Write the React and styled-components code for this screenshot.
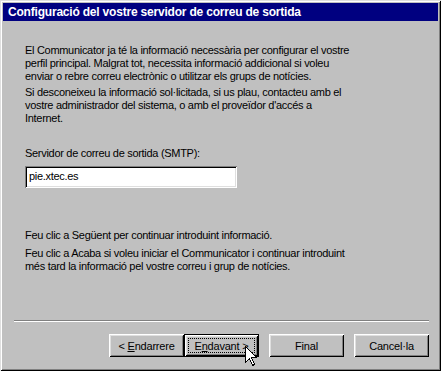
import React from 'react';
import styled, { createGlobalStyle } from 'styled-components';

const GlobalStyle = createGlobalStyle`
  html, body {
    margin: 0;
    padding: 0;
    background: #c0c0c0;
  }
  * {
    box-sizing: border-box;
  }
`;

const Window = styled.div`
  position: relative;
  width: 441px;
  height: 371px;
  background: #c0c0c0;
  padding: 3px 3px 3px 3px;
  display: flex;
  flex-direction: column;
  font-family: 'Liberation Sans', Arial, sans-serif;
  font-size: 11px;
  color: #000;
  box-shadow:
    inset 1px 1px 0 #dfdfdf,
    inset -1px -1px 0 #000,
    inset 2px 2px 0 #fff,
    inset -2px -2px 0 #808080;
`;

const TitleBar = styled.div`
  height: 18px;
  background: #000080;
  color: #fff;
  font-weight: bold;
  font-size: 12px;
  letter-spacing: -0.2px;
  line-height: 18px;
  padding-left: 5px;
  white-space: nowrap;
`;

const Body = styled.div`
  flex: 1;
  padding: 23px 22px 0 22px;
  display: flex;
  flex-direction: column;
  letter-spacing: -0.3px;
`;

const Para = styled.p`
  margin: 0 0 ${({ gap }) => gap || 3}px 0;
  line-height: 13px;
  white-space: nowrap;
`;

const Label = styled.div`
  margin-top: 19px;
  line-height: 13px;
`;

const TextBox = styled.div`
  margin-top: 6px;
  width: 212px;
  height: 22px;
  background: #fff;
  padding: 4px 0 0 4px;
  line-height: 13px;
  box-shadow:
    inset 1px 1px 0 #808080,
    inset -1px -1px 0 #fff,
    inset 2px 2px 0 #000,
    inset -2px -2px 0 #dfdfdf;
`;

const Spacer = styled.div`
  height: ${({ h }) => h}px;
`;

const Separator = styled.div`
  margin: 0 9px 0 11px;
  height: 2px;
  border-top: 1px solid #808080;
  border-bottom: 1px solid #fff;
`;

const ButtonRow = styled.div`
  display: flex;
  justify-content: flex-end;
  padding: 12px 9px 11px 0;
`;

const Button = styled.div`
  width: 75px;
  height: 23px;
  margin-left: ${({ gap }) => gap || 0}px;
  display: flex;
  align-items: center;
  justify-content: center;
  background: #c0c0c0;
  font-size: 11px;
  letter-spacing: -0.2px;
  position: relative;
  box-shadow: ${({ primary }) =>
    primary
      ? 'inset 1px 1px 0 #000, inset -1px -1px 0 #000, inset 2px 2px 0 #fff, inset -2px -2px 0 #000, inset 3px 3px 0 #dfdfdf, inset -3px -3px 0 #808080'
      : 'inset 1px 1px 0 #fff, inset -1px -1px 0 #000, inset 2px 2px 0 #dfdfdf, inset -2px -2px 0 #808080'};
`;

const Focus = styled.span`
  position: absolute;
  left: 4px;
  top: 4px;
  right: 4px;
  bottom: 4px;
  border: 1px dotted #000;
`;

const Key = styled.span`
  text-decoration: underline;
`;

const Cursor = styled.svg`
  position: absolute;
  left: 245px;
  top: 346px;
`;

export default function App() {
  return (
    <>
      <GlobalStyle />
      <Window>
        <TitleBar>Configuració del vostre servidor de correu de sortida</TitleBar>
        <Body>
          <Para>
            El Communicator ja té la informació necessària per configurar el vostre
            <br />
            perfil principal. Malgrat tot, necessita informació addicional si voleu
            <br />
            enviar o rebre correu electrònic o utilitzar els grups de notícies.
          </Para>
          <Para>
            Si desconeixeu la informació sol·licitada, si us plau, contacteu amb el
            <br />
            vostre administrador del sistema, o amb el proveïdor d'accés a
            <br />
            Internet.
          </Para>
          <Label>Servidor de correu de sortida (SMTP):</Label>
          <TextBox>pie.xtec.es</TextBox>
          <Spacer h={41} />
          <Para gap={5}>Feu clic a Següent per continuar introduint informació.</Para>
          <Para>
            Feu clic a Acaba si voleu iniciar el Communicator i continuar introduint
            <br />
            més tard la informació pel vostre correu i grup de notícies.
          </Para>
        </Body>
        <Separator />
        <ButtonRow>
          <Button>
            &lt;&nbsp;<Key>E</Key>ndarrere
          </Button>
          <Button primary>
            <Focus />
            E<Key>n</Key>davant &gt;
          </Button>
          <Button gap={10}>Final</Button>
          <Button gap={10}>Cancel·la</Button>
        </ButtonRow>
        <Cursor width="13" height="22" viewBox="0 0 13 22">
          <path
            d="M0.5 0.5 L0.5 16.5 L4.5 12.5 L7.5 19.5 L9.5 18.5 L6.5 11.5 L11.5 11.5 Z"
            fill="#fff"
            stroke="#000"
            strokeWidth="1"
            shapeRendering="crispEdges"
          />
        </Cursor>
      </Window>
    </>
  );
}
